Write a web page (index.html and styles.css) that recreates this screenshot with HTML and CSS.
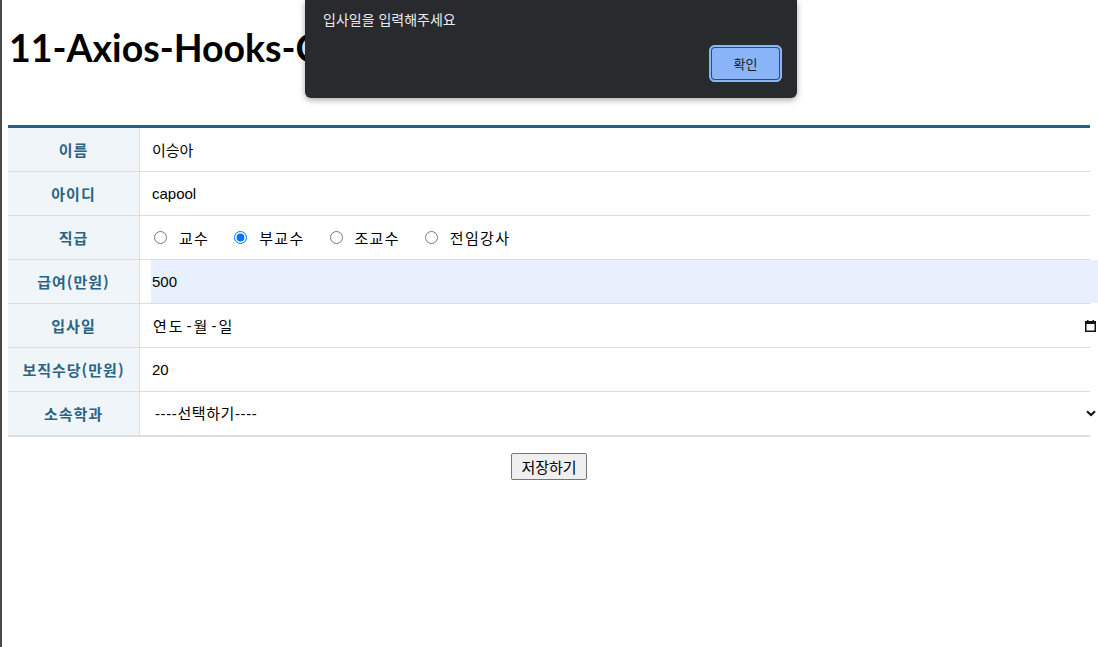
FILE: index.html
```html
<!DOCTYPE html>
<html lang="ko">
<head>
<meta charset="utf-8">
<title>11-Axios-Hooks-CRUD</title>
<link rel="stylesheet" href="styles.css">
</head>
<body>
<div class="edge"></div>
<h1 class="title">11-Axios-Hooks-CRUD</h1>
<form class="form">
  <table class="grid">
    <tr>
      <th>이름</th>
      <td><input class="field" type="text" value="이승아"></td>
    </tr>
    <tr>
      <th>아이디</th>
      <td><input class="field" type="text" value="capool"></td>
    </tr>
    <tr>
      <th>직급</th>
      <td>
        <div class="radios">
          <label class="radio"><input type="radio" name="pos"><span>교수</span></label>
          <label class="radio"><input type="radio" name="pos" checked><span>부교수</span></label>
          <label class="radio"><input type="radio" name="pos"><span>조교수</span></label>
          <label class="radio"><input type="radio" name="pos"><span>전임강사</span></label>
        </div>
      </td>
    </tr>
    <tr>
      <th>급여(만원)</th>
      <td><input class="field autofill" type="text" value="500"></td>
    </tr>
    <tr>
      <th>입사일</th>
      <td>
        <div class="date">
          <span class="date-text">연도</span><span class="date-sep">-</span><span class="date-text">월</span><span class="date-sep">-</span><span class="date-text">일</span>
          <svg class="cal" width="11" height="12" viewBox="0 0 11 12"><rect x="0.75" y="1.75" width="9.5" height="9.5" fill="none" stroke="#111" stroke-width="1.5"/><rect x="0" y="1" width="11" height="3" fill="#111"/><rect x="2" y="0" width="1.5" height="2" fill="#111"/><rect x="7.5" y="0" width="1.5" height="2" fill="#111"/></svg>
        </div>
      </td>
    </tr>
    <tr>
      <th>보직수당(만원)</th>
      <td><input class="field" type="text" value="20"></td>
    </tr>
    <tr>
      <th>소속학과</th>
      <td>
        <div class="select-wrap">
          <select class="select"><option>----선택하기----</option></select>
          <svg class="chev" width="10" height="7" viewBox="0 0 10 7"><path d="M1 1.2 L5 5 L9 1.2" fill="none" stroke="#111" stroke-width="2"/></svg>
        </div>
      </td>
    </tr>
  </table>
  <div class="actions"><button type="button" class="save">저장하기</button></div>
</form>

<div class="dialog">
  <p class="dialog-msg">입사일을 입력해주세요</p>
  <div class="dialog-actions"><button type="button" class="ok">확인</button></div>
</div>
</body>
</html>
```
FILE: styles.css
```css
html, body {
  margin: 0;
  padding: 0;
  background: #fff;
}
body {
  padding: 8px;
  font-family: "Noto Sans", "Noto Sans CJK KR", sans-serif;
  color: #000;
}
.edge {
  position: fixed;
  left: 0;
  top: 0;
  bottom: 0;
  width: 2px;
  background: #4a4a4a;
}
.title {
  font-family: Lato, "Noto Sans", sans-serif;
  font-size: 37.5px;
  font-weight: 700;
  margin: 0 0 55px;
  padding-top: 17px;
  padding-left: 1px;
  line-height: 45px;
  white-space: nowrap;
}
.form {
  margin: 0;
}
.grid {
  width: 100%;
  border-collapse: collapse;
  border-top: 3px solid #1c6585;
  border-bottom: 2px solid #dddddd;
}
.grid th, .grid td {
  height: 43px;
  padding: 0;
  border-bottom: 1px solid #dddddd;
}
.grid tr:last-child th, .grid tr:last-child td {
  border-bottom: none;
}
.grid th {
  width: 131px;
  background: #f0f5f9;
  color: #2a6385;
  font-family: "Noto Sans CJK KR", sans-serif;
  font-size: 15px;
  font-weight: 700;
  letter-spacing: 1px;
  text-align: center;
  border-right: 1px solid #dddddd;
}
.grid td {
  padding-left: 11px;
  padding-right: 0;
}
.field {
  display: block;
  box-sizing: border-box;
  width: calc(100% + 8px);
  height: 43px;
  border: none;
  outline: none;
  padding: 0 1px;
  margin: 0;
  font-family: "Liberation Sans", "Noto Sans CJK KR", sans-serif;
  font-size: 15px;
  color: #000;
  background: transparent;
}
.autofill {
  background: #e8f0fe;
}
.radios {
  display: flex;
  align-items: center;
  gap: 25px;
  padding-left: 3px;
}
.radio {
  display: flex;
  align-items: center;
  gap: 12px;
  font-family: "Noto Sans CJK KR", sans-serif;
  font-size: 15px;
  letter-spacing: 1.3px;
}
.radio input {
  margin: 0;
  width: 13px;
  height: 13px;
}
.date {
  display: flex;
  align-items: center;
  height: 43px;
  width: calc(100% + 8px);
  padding-left: 2px;
  box-sizing: border-box;
  font-family: "Noto Sans CJK KR", sans-serif;
  font-size: 15px;
}
.date-sep {
  padding: 0 2px;
  font-family: "Liberation Sans", sans-serif;
}
.date-text {
  letter-spacing: 2px;
}
.cal {
  margin-left: auto;
  margin-right: 2px;
}
.select-wrap {
  position: relative;
  width: calc(100% + 8px);
}
.select {
  display: block;
  width: 100%;
  height: 43px;
  border: none;
  outline: none;
  appearance: none;
  -webkit-appearance: none;
  background: transparent;
  padding: 0 4px;
  font-family: "Liberation Sans", "Noto Sans CJK KR", sans-serif;
  font-size: 15px;
  letter-spacing: 0.6px;
  color: #000;
}
.chev {
  position: absolute;
  right: 2px;
  top: 18px;
}
.actions {
  display: flex;
  justify-content: center;
  padding-top: 16px;
}
.save {
  font-family: "Noto Sans CJK KR", sans-serif;
  font-size: 15px;
  line-height: 21px;
  padding: 2px 9px;
  background: #efefef;
  border: 1px solid #767676;
  border-radius: 2px;
  color: #000;
}
.dialog {
  position: absolute;
  left: 305px;
  top: 0;
  width: 492px;
  height: 98px;
  box-sizing: border-box;
  background: #292a2d;
  border-radius: 0 0 6px 6px;
  box-shadow: 0 2px 6px rgba(0, 0, 0, 0.35);
  padding: 9px 16px 0 18px;
}
.dialog-msg {
  margin: 0;
  color: #e8eaed;
  font-family: "Noto Sans CJK KR", sans-serif;
  font-size: 14px;
  line-height: 20px;
}
.dialog-actions {
  display: flex;
  justify-content: flex-end;
  padding-top: 17px;
}
.ok {
  width: 71px;
  height: 35px;
  box-sizing: border-box;
  background: #8ab4f8;
  color: #202124;
  border: 2px solid #3c4a60;
  outline: 2px solid #8ab4f8;
  outline-offset: -1px;
  box-shadow: 0 0 0 1px #8ab4f8;
  border-radius: 5px;
  font-family: "Noto Sans CJK KR", sans-serif;
  font-size: 13px;
  padding: 0;
}
```
